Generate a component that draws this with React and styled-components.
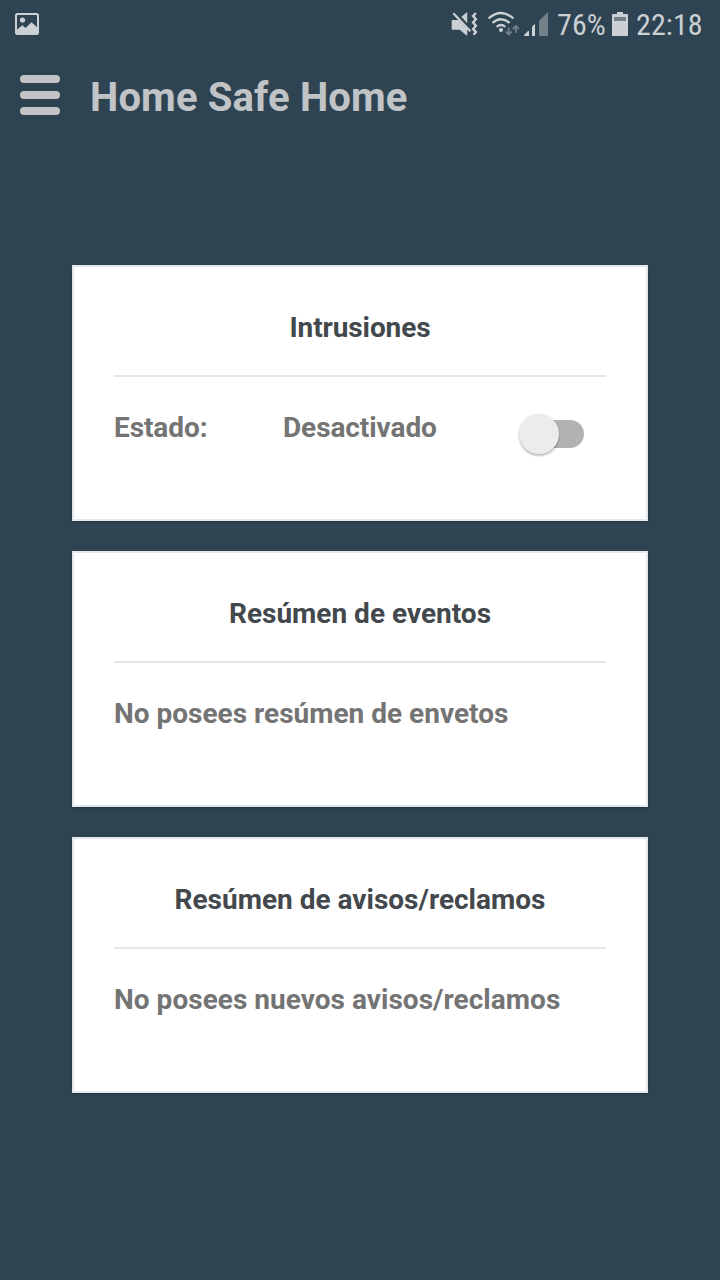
import React from "react";
import styled, { createGlobalStyle } from "styled-components";

const GlobalStyle = createGlobalStyle`
  * { box-sizing: border-box; }
  body { margin: 0; background: #2f4452; font-family: Roboto, "Liberation Sans", sans-serif; }
`;

const Screen = styled.div`
  width: 720px;
  height: 1280px;
  overflow: hidden;
  display: flex;
  flex-direction: column;
  background: #2f4452;
`;

const StatusBar = styled.div`
  height: 48px;
  display: flex;
  align-items: center;
  justify-content: space-between;
  padding: 0 17px 0 15px;
  color: #cbd0d4;
`;

const StatusGroup = styled.div`
  display: flex;
  align-items: center;
  height: 48px;
`;

const StatusIcon = styled.svg`
  display: block;
  flex: none;
`;

const BatterySlot = styled.span`
  width: 16px;
  margin: 0 0 0 6px;
`;

const StatusText = styled.span`
  width: ${(p) => p.$width}px;
  margin-left: 8px;
  font-size: 30px;
  line-height: 48px;
  font-stretch: 75%;
  white-space: nowrap;
  padding-top: 1px;
  letter-spacing: 0.1px;
`;

const Header = styled.header`
  height: 97px;
  display: flex;
  align-items: center;
  padding-left: 20px;
`;

const MenuButton = styled.button`
  width: 40px;
  height: 40px;
  margin: 0 30px 3px 0;
  padding: 0;
  border: 0;
  background: none;
  display: flex;
  flex-direction: column;
  justify-content: space-between;
`;

const MenuBar = styled.span`
  width: 40px;
  height: 8px;
  border-radius: 4px;
  background: #c1c4c7;
`;

const AppTitle = styled.h1`
  margin: 0;
  padding-top: 3px;
  font-size: 40px;
  line-height: 48px;
  font-weight: 700;
  letter-spacing: 0.15px;
  color: #c1c4c7;
`;

const CardList = styled.main`
  display: flex;
  flex-direction: column;
  gap: 30px;
  padding: 120px 72px 0;
`;

const Card = styled.section`
  height: 256px;
  padding: 44px 40px 0;
  background: #fff;
  border: 2px solid #e1e8ee;
  box-shadow: 0 1px 2px rgba(0, 0, 0, 0.25);
`;

const CardTitle = styled.h2`
  margin: 0;
  height: 66px;
  border-bottom: 2px solid #e1e8ed;
  font-size: 28px;
  line-height: 34px;
  font-weight: 700;
  text-align: center;
  letter-spacing: ${(p) => p.$tracking || 0}px;
  color: #43484d;
`;

const CardBody = styled.div`
  display: flex;
  padding-top: 34px;
`;

const CardText = styled.span`
  width: ${(p) => (p.$width ? `${p.$width}px` : "auto")};
  font-size: 28px;
  line-height: 34px;
  font-weight: 700;
  letter-spacing: ${(p) => p.$tracking || 0}px;
  color: #747474;
  white-space: nowrap;
`;

const Toggle = styled.button`
  width: 66px;
  height: 40px;
  margin: 3px 22px 0 auto;
  padding: 0;
  border: 0;
  background: none;
  display: flex;
  align-items: center;
`;

const Track = styled.span`
  width: 56px;
  height: 28px;
  margin-left: 10px;
  border-radius: 14px;
  background: #b2b2b2;
  display: flex;
  align-items: center;
`;

const Thumb = styled.span`
  flex: none;
  width: 40px;
  height: 40px;
  margin-left: -9px;
  border-radius: 50%;
  background: #ececec;
  box-shadow: 0 2px 2px rgba(0, 0, 0, 0.24), 0 0 2px rgba(0, 0, 0, 0.1);
`;

const PictureIcon = () => (
  <StatusIcon width="24" height="22" viewBox="0 0 24 22">
    <rect x="1" y="1" width="22" height="20" rx="1.5" fill="none" stroke="currentColor" strokeWidth="2" />
    <circle cx="7.5" cy="7" r="2.6" fill="currentColor" />
    <path d="M1.5 17 7.3 12.2 10.5 15 16.5 9.2 22.5 14.5V21h-21z" fill="currentColor" />
  </StatusIcon>
);

const SignalIcons = () => (
  <StatusIcon width="98" height="48" viewBox="451 0 98 48" fill="currentColor">
    <path d="M452.5 20h6l8.7 9V36l-7.5-6.2h-7.2q-.8 0-.8-.8v-8.2q0-.8.8-.8zM461.4 16.8 467.2 12v11.2z" />
    <path d="m453.3 13.3 17 18" fill="none" stroke="currentColor" strokeWidth="2.2" />
    <path d="m475.9 13-2.8 3 2.8 3.3-2.8 3.2 2.8 3.2-2.8 3.2 2.8 3.2-2.3 2.7" fill="none" stroke="currentColor" strokeWidth="2.4" />
    <g fill="none" stroke="currentColor" strokeWidth="2.3">
      <path d="M488.5 18.5q12.5-11 25 0M492.5 22.8q8.5-7.2 17 0M496.7 26.8q4.3-3.6 8.6 0" />
    </g>
    <circle cx="501" cy="30.1" r="2" />
    <path d="M508.7 27.5v7m-3-3 3 3 3-3M515.8 33v-7m-3 3 3-3 3 3" fill="none" stroke="#728089" strokeWidth="1.8" />
    <path d="M524 36v-1l4-4h1v5zM532 36v-9.3l3-3V36z" />
    <path d="M539 36V21l9-9v24z" fill="#728089" />
  </StatusIcon>
);

const BatteryIcon = () => (
  <StatusIcon width="16" height="24" viewBox="0 0 16 24">
    <path d="M5 0h6v2h4q1 0 1 1v20q0 1-1 1H1q-1 0-1-1V3q0-1 1-1h4z" fill="currentColor" />
    <path d="M2 5h12v4H2z" fill="#728089" />
  </StatusIcon>
);

const messages = [
  { title: "Resúmen de eventos", text: "No posees resúmen de envetos", tracking: 0 },
  { title: "Resúmen de avisos/reclamos", text: "No posees nuevos avisos/reclamos", tracking: 0.03 },
];

export default function App() {
  return (
    <Screen>
      <GlobalStyle />
      <StatusBar>
        <PictureIcon />
        <StatusGroup>
          <SignalIcons />
          <StatusText $width={49}>76%</StatusText>
          <BatterySlot><BatteryIcon /></BatterySlot>
          <StatusText $width={67}>22:18</StatusText>
        </StatusGroup>
      </StatusBar>
      <Header>
        <MenuButton aria-label="Menú">
          <MenuBar /><MenuBar /><MenuBar />
        </MenuButton>
        <AppTitle>Home Safe Home</AppTitle>
      </Header>
      <CardList>
        <Card>
          <CardTitle $tracking={-0.1}>Intrusiones</CardTitle>
          <CardBody>
            <CardText $width={169} $tracking={-0.08}>Estado:</CardText>
            <CardText $tracking={-0.08}>Desactivado</CardText>
            <Toggle role="switch" aria-checked="false" aria-label="Estado">
              <Track><Thumb /></Track>
            </Toggle>
          </CardBody>
        </Card>
        {messages.map(({ title, text, tracking }) => (
          <Card key={title}>
            <CardTitle>{title}</CardTitle>
            <CardBody><CardText $tracking={tracking}>{text}</CardText></CardBody>
          </Card>
        ))}
      </CardList>
    </Screen>
  );
}
